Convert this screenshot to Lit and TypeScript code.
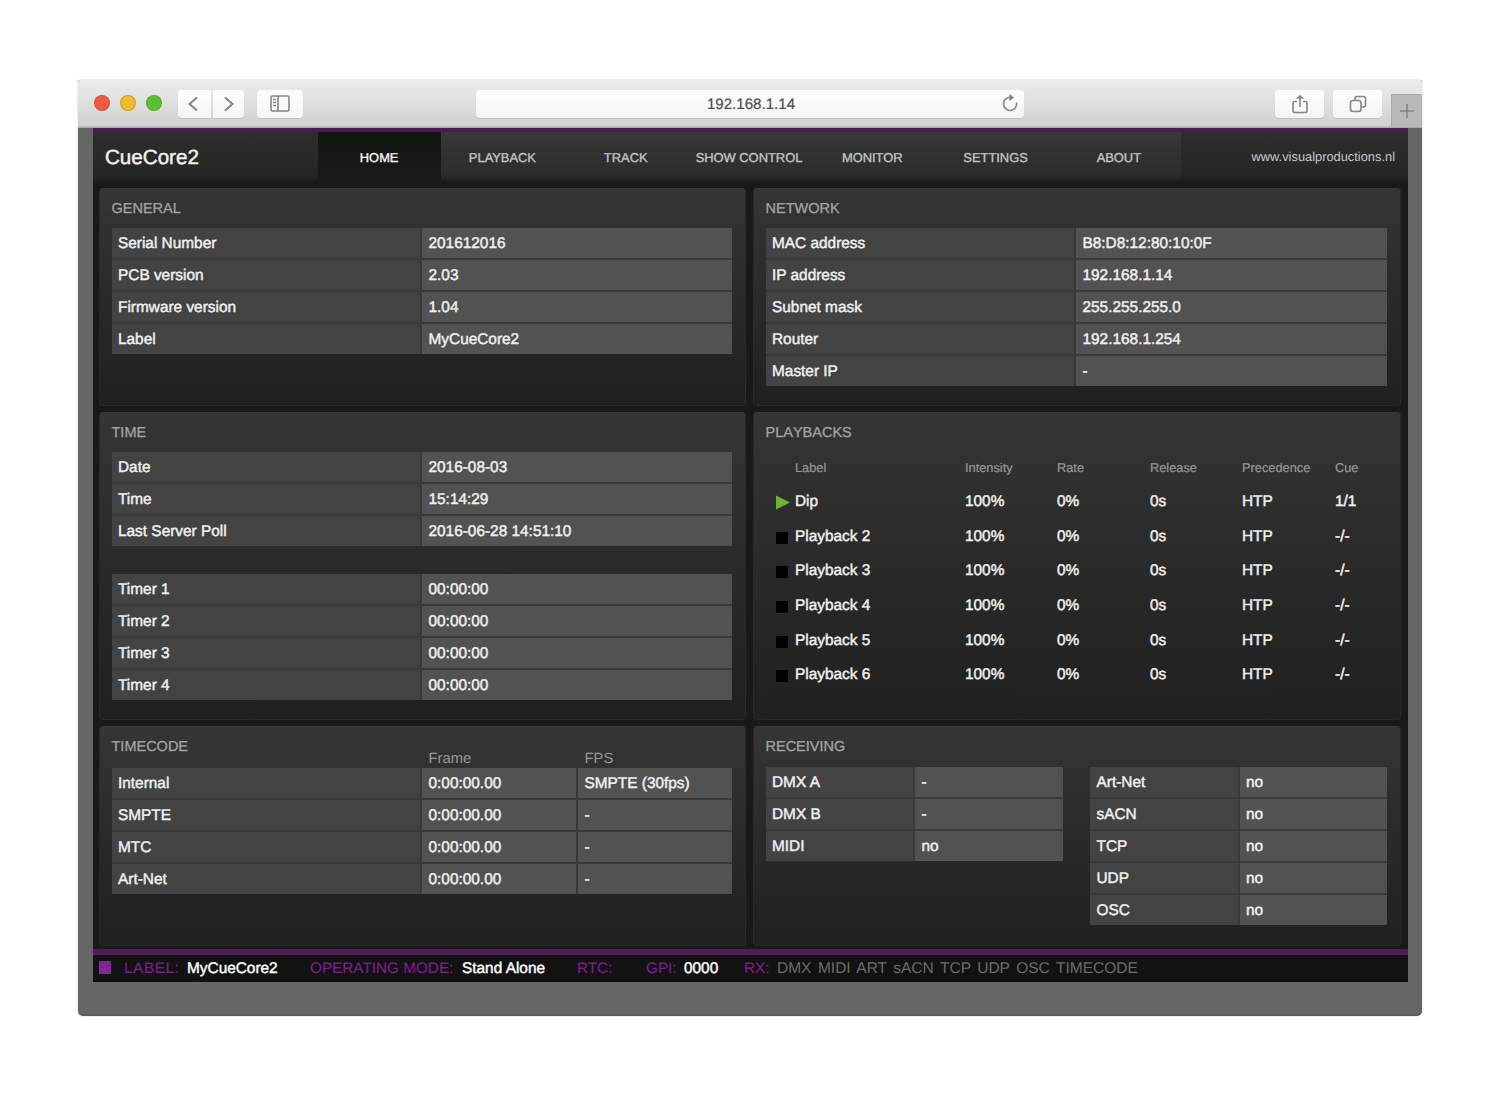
import { LitElement, html, css, svg } from "lit";
import { customElement } from "lit/decorators.js";
import { classMap } from "lit/directives/class-map.js";

type Row = string[];

const NAV = ["HOME", "PLAYBACK", "TRACK", "SHOW CONTROL", "MONITOR", "SETTINGS", "ABOUT"];

const GENERAL: Row[] = [
  ["Serial Number", "201612016"],
  ["PCB version", "2.03"],
  ["Firmware version", "1.04"],
  ["Label", "MyCueCore2"],
];
const NETWORK: Row[] = [
  ["MAC address", "B8:D8:12:80:10:0F"],
  ["IP address", "192.168.1.14"],
  ["Subnet mask", "255.255.255.0"],
  ["Router", "192.168.1.254"],
  ["Master IP", "-"],
];
const TIME: Row[] = [
  ["Date", "2016-08-03"],
  ["Time", "15:14:29"],
  ["Last Server Poll", "2016-06-28 14:51:10"],
];
const TIMERS: Row[] = [1, 2, 3, 4].map((n) => [`Timer ${n}`, "00:00:00"]);
const TIMECODE: Row[] = [
  ["Internal", "0:00:00.00", "SMPTE (30fps)"],
  ["SMPTE", "0:00:00.00", "-"],
  ["MTC", "0:00:00.00", "-"],
  ["Art-Net", "0:00:00.00", "-"],
];
const RX_LEFT: Row[] = [
  ["DMX A", "-"],
  ["DMX B", "-"],
  ["MIDI", "no"],
];
const RX_RIGHT: Row[] = ["Art-Net", "sACN", "TCP", "UDP", "OSC"].map((n) => [n, "no"]);
const PLAYBACKS: Row[] = [
  ["Dip", "100%", "0%", "0s", "HTP", "1/1"],
  ...[2, 3, 4, 5, 6].map((n) => [`Playback ${n}`, "100%", "0%", "0s", "HTP", "-/-"]),
];

@customElement("app-root")
export class AppRoot extends LitElement {
  static styles = css`
    :host {
      display: block;
      width: 1500px;
      height: 1097px;
      box-sizing: border-box;
      padding: 80px 78px 81px;
      background: #fff;
      font-family: "Liberation Sans", Arial, sans-serif;
      font-size: 15.4px;
      color: #f0f0f0;
      text-rendering: geometricPrecision;
      white-space: nowrap;
    }
    * {
      box-sizing: border-box;
    }
    .window {
      width: 1344px;
      height: 936px;
      background: #666;
      border-radius: 2px 2px 5px 5px;
      overflow: hidden;
      border-bottom: 2px solid #595959;
      box-shadow: 0 0 2px rgba(0, 0, 0, 0.25);
    }
    .toolbar {
      height: 48px;
      display: flex;
      padding-left: 16px;
      background: linear-gradient(#ececec, #d2d2d2 94%, #d9d9d9 94%, #a5a5a5);
    }
    .lights {
      display: flex;
      gap: 10px;
      margin-top: 15px;
      width: 84px;
    }
    .light {
      width: 16px;
      height: 16px;
      border-radius: 50%;
      border: 1px solid rgba(90, 70, 20, 0.25);
    }
    .red { background: #ee5a43; }
    .yellow { background: #f1bb2c; }
    .green { background: #5bc22f; }
    .btn {
      height: 28px;
      margin-top: 10px;
      padding-bottom: 1px;
      background: linear-gradient(#fefefe, #f4f4f4);
      border-radius: 4px;
      box-shadow: 0 1px 1px rgba(0, 0, 0, 0.1);
      display: flex;
      align-items: center;
      justify-content: center;
    }
    .back { width: 33px; border-radius: 4px 0 0 4px; margin-right: 2px; padding-right: 3px; }
    .fwd { width: 31px; border-radius: 0 4px 4px 0; }
    .side { width: 46px; margin-left: 13px; }
    .address {
      width: 548px;
      margin-left: 173px;
      color: #4c4c4c;
      font-size: 15.1px;
      display: grid;
      grid-template-columns: 1fr auto 1fr;
      padding: 0 0 0 2px;
    }
    .url { -webkit-text-stroke: 0.2px #4c4c4c; }
    .reload { justify-self: end; margin: -2px 5px 0 0; }
    .share { width: 49px; margin-left: 251px; }
    .tabs { width: 49px; margin-left: 9px; }
    .plus {
      width: 31px;
      height: 34px;
      margin: 14px 0 0 auto;
      background: #b9b9b9;
      border: 1px solid #aaa;
      border-right: 0;
      display: flex;
      align-items: center;
      justify-content: center;
    }
    svg { display: block; }
    .page {
      margin: 0 14px 0 15px;
      height: 854px;
      background: #191919;
      border-top: 4px solid #4b1a53;
      display: flex;
      flex-direction: column;
    }
    .header {
      height: 52px;
      display: flex;
      background: linear-gradient(#2d2f2c, #252525 85%, #191919 98%);
    }
    .brand {
      width: 225px;
      padding: 14px 0 0 12px;
      font-size: 20.6px;
      line-height: 24px;
      -webkit-text-stroke: 0.45px #f2f2f2;
    }
    .nav {
      width: 863px;
      display: grid;
      grid-template-columns: repeat(7, 1fr);
      background: linear-gradient(#373a36, #2b2b2b 85%, #191919 98%);
      font-size: 12.9px;
      color: #c4c4c4;
      -webkit-text-stroke: 0.35px currentColor;
    }
    .tab {
      text-align: center;
      line-height: 52px;
      padding-right: 1px;
    }
    .active {
      background: linear-gradient(#121711, #1a1a1a);
      color: #f5f5f5;
    }
    .site {
      flex: 1;
      text-align: right;
      padding-right: 13px;
      font-size: 12.85px;
      line-height: 49px;
      color: #c8c8c8;
    }
    .panels {
      height: 765px;
      padding: 4px 7px 0 6px;
      display: grid;
      grid-template-columns: 647px 648px;
      grid-template-rows: 218px 308px 220px;
      gap: 6px 7px;
    }
    .panel {
      background: linear-gradient(#353535, #2e2e2e 30%, #202020);
      border: 1px solid #2a2a2a;
      border-top-color: #3a3a3a;
      border-radius: 4px;
      padding: 12px 13px 0 11.5px;
    }
    .title {
      height: 27px;
      font-size: 14.5px;
      line-height: 17px;
      color: #a3a3a3;
      font-kerning: none;
      -webkit-text-stroke: 0.3px #a3a3a3;
    }
    .table {
      display: grid;
      row-gap: 2px;
      background: #393939;
    }
    .row {
      display: grid;
      column-gap: 2px;
      grid-template-columns: 308.5px 1fr;
      grid-template-rows: 30px;
      height: 30px;
    }
    .three .row { grid-template-columns: 308.5px 154px 1fr; }
    .narrow .row { grid-template-columns: 147.5px 1fr; }
    .cell {
      background: #525252;
      padding: 1px 0 0 6.5px;
      line-height: 30px;
      height: 30px;
      -webkit-text-stroke: 0.45px currentColor;
    }
    .name { background: #434343; }
    .timers { margin-top: 28px; }
    .tc-title { height: 12px; }
    .tc-head {
      height: 17px;
      display: grid;
      grid-template-columns: 310.5px 156px 1fr;
      padding: 0 0 0 6.5px;
      line-height: 16px;
      font-size: 14.8px;
      color: #979797;
    }
    .rx {
      display: grid;
      grid-template-columns: 297px 297px;
      justify-content: space-between;
      align-items: start;
    }
    .rx-panel .title { height: 28px; }
    .pb {
      display: grid;
      grid-template-columns: 19px 170px 92px 93px 92px 93px 1fr;
      padding-left: 10.5px;
      height: 34.6px;
      align-items: center;
      -webkit-text-stroke: 0.45px currentColor;
    }
    .pb-head {
      height: 33px;
      font-size: 12.8px;
      color: #989898;
      padding-bottom: 2px;
      -webkit-text-stroke: 0.2px currentColor;
    }
    .square {
      width: 12px;
      height: 12px;
      background: #020202;
      margin-top: 2px;
    }
    .status {
      flex: 1;
      border-top: 6px solid #4f1e59;
      background: #121212;
      display: flex;
      padding-left: 6px;
      line-height: 27px;
      font-size: 15.4px;
      color: #fafafa;
      -webkit-text-stroke: 0.45px currentColor;
    }
    .led {
      width: 12px;
      height: 13px;
      margin-top: 6px;
      background: #852399;
    }
    .item { display: flex; }
    .key { color: #831d94; -webkit-text-stroke: 0.1px currentColor; font-size: 15.3px; }
    .dim { color: #6c6c6c; -webkit-text-stroke: 0; font-size: 15.5px; word-spacing: 2.2px; }
    .w1 { margin-left: 13px; width: 186px; }
    .w1 .key { width: 63px; letter-spacing: 0.6px; }
    .w2 { width: 267px; }
    .w2 .key { width: 152px; }
    .w3 { width: 69px; }
    .w4 { width: 98px; }
    .w4 .key { width: 38px; }
    .w5 .key { width: 33px; }
  `;

  private table(rows: Row[], extra = "") {
    return html`<div class="table ${extra}">
      ${rows.map(
        (row) => html`<div class="row">
          ${row.map((c, i) => html`<div class=${classMap({ cell: true, name: i === 0 })}>${c}</div>`)}
        </div>`
      )}
    </div>`;
  }

  private icon(w: number, h: number, body: unknown) {
    return html`<svg
      width=${w}
      height=${h}
      viewBox="0 0 ${w} ${h}"
      fill="none"
      stroke="#858585"
      stroke-width="1.6"
    >${body}</svg>`;
  }

  private status(cls: string, key: string, value = "", dim = false) {
    return html`<div class="item ${cls}">
      <span class="key">${key}</span><span class=${dim ? "dim" : ""}>${value}</span>
    </div>`;
  }

  render() {
    return html`
      <div class="window">
        <div class="toolbar">
          <div class="lights">
            <div class="light red"></div>
            <div class="light yellow"></div>
            <div class="light green"></div>
          </div>
          <div class="btn back">${this.icon(12, 16, svg`<path d="M10 1.5 2.5 8l7.5 6.5" stroke-width="2"/>`)}</div>
          <div class="btn fwd">${this.icon(12, 16, svg`<path d="M2 1.5 9.5 8 2 14.5" stroke-width="2"/>`)}</div>
          <div class="btn side">
            ${this.icon(20, 17, svg`<rect x="1" y="1" width="18" height="15" rx="1.5"/><path d="M8 1v15M3 4.5h3M3 7.5h3M3 10.5h3"/>`)}
          </div>
          <div class="btn address">
            <span></span><span class="url">192.168.1.14</span>
            <span class="reload">
              ${this.icon(18, 20, svg`<path d="M15.5 9.5A6.6 6.6 0 1 1 9.5 4.3"/><path d="M8.5 1 13 4.5 8.5 8z" fill="#808080" stroke="none"/>`)}
            </span>
          </div>
          <div class="btn share">
            ${this.icon(18, 20, svg`<path d="M6 7.5H3.5A1.5 1.5 0 0 0 2 9v8a1.5 1.5 0 0 0 1.5 1.5h11A1.5 1.5 0 0 0 16 17V9a1.5 1.5 0 0 0-1.5-1.5H12M9 13V2M6 4.8 9 1.8l3 3"/>`)}
          </div>
          <div class="btn tabs">
            ${this.icon(18, 18, svg`<rect x="1.5" y="5.5" width="10.5" height="11" rx="2.5"/><path d="M6 5.5v-2a2 2 0 0 1 2-2h6.5a2 2 0 0 1 2 2V10a2 2 0 0 1-2 2H12"/>`)}
          </div>
          <div class="plus">${this.icon(14, 14, svg`<path d="M7 0v14M0 7h14"/>`)}</div>
        </div>
        <div class="page">
          <div class="header">
            <div class="brand">CueCore2</div>
            <div class="nav">
              ${NAV.map((n, i) => html`<div class=${classMap({ tab: true, active: i === 0 })}>${n}</div>`)}
            </div>
            <div class="site">www.visualproductions.nl</div>
          </div>
          <div class="panels">
            <div class="panel">
              <div class="title">GENERAL</div>
              ${this.table(GENERAL)}
            </div>
            <div class="panel">
              <div class="title">NETWORK</div>
              ${this.table(NETWORK)}
            </div>
            <div class="panel">
              <div class="title">TIME</div>
              ${this.table(TIME)} ${this.table(TIMERS, "timers")}
            </div>
            <div class="panel">
              <div class="title">PLAYBACKS</div>
              <div class="pb pb-head">
                <span></span><span>Label</span><span>Intensity</span><span>Rate</span><span>Release</span
                ><span>Precedence</span><span>Cue</span>
              </div>
              ${PLAYBACKS.map(
                (p, i) => html`<div class="pb">
                  ${i === 0
                    ? html`<svg width="14" height="16" viewBox="0 0 14 16"><path d="M0 1.5 14 8.5 0 15.5z" fill="#6cb52d" /></svg>`
                    : html`<span class="square"></span>`}
                  ${p.map((c) => html`<span>${c}</span>`)}
                </div>`
              )}
            </div>
            <div class="panel">
              <div class="title tc-title">TIMECODE</div>
              <div class="tc-head"><span></span><span>Frame</span><span>FPS</span></div>
              ${this.table(TIMECODE, "three")}
            </div>
            <div class="panel rx-panel">
              <div class="title">RECEIVING</div>
              <div class="rx">${this.table(RX_LEFT, "narrow")} ${this.table(RX_RIGHT, "narrow")}</div>
            </div>
          </div>
          <div class="status">
            <div class="led"></div>
            ${this.status("w1", "LABEL:", "MyCueCore2")}
            ${this.status("w2", "OPERATING MODE:", "Stand Alone")}
            ${this.status("w3", "RTC:")}
            ${this.status("w4", "GPI:", "0000")}
            ${this.status("w5", "RX:", "DMX MIDI ART sACN TCP UDP OSC TIMECODE", true)}
          </div>
        </div>
      </div>
    `;
  }
}
